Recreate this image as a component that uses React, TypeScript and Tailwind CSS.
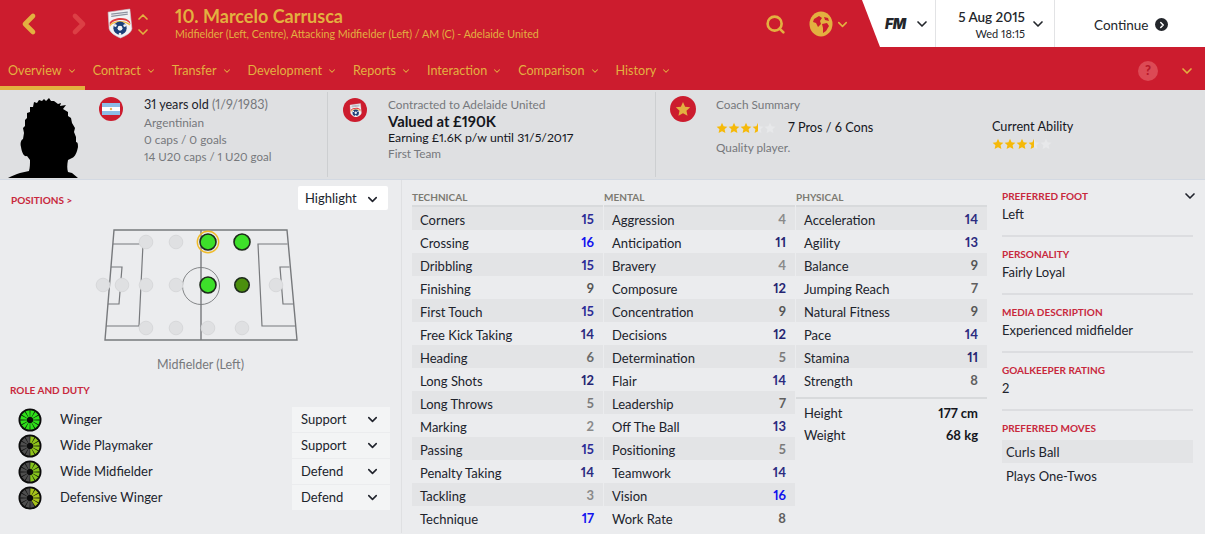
import { ChevronDown, ChevronLeft, ChevronRight, ChevronUp, Search } from "lucide-react";

const navItems = ["Overview", "Contract", "Transfer", "Development", "Reports", "Interaction", "Comparison", "History"];

const technical: [string, number][] = [
  ["Corners", 15], ["Crossing", 16], ["Dribbling", 15], ["Finishing", 9], ["First Touch", 15], ["Free Kick Taking", 14], ["Heading", 6],
  ["Long Shots", 12], ["Long Throws", 5], ["Marking", 2], ["Passing", 15], ["Penalty Taking", 14], ["Tackling", 3], ["Technique", 17],
];
const mental: [string, number][] = [
  ["Aggression", 4], ["Anticipation", 11], ["Bravery", 4], ["Composure", 12], ["Concentration", 9], ["Decisions", 12], ["Determination", 5],
  ["Flair", 14], ["Leadership", 7], ["Off The Ball", 13], ["Positioning", 5], ["Teamwork", 14], ["Vision", 16], ["Work Rate", 8],
];
const physical: [string, number][] = [
  ["Acceleration", 14], ["Agility", 13], ["Balance", 9], ["Jumping Reach", 7], ["Natural Fitness", 9], ["Pace", 14], ["Stamina", 11], ["Strength", 8],
];

const roles = [
  { name: "Winger", duty: "Support", color: "#2fe01a", lit: 12 },
  { name: "Wide Playmaker", duty: "Support", color: "#8fc31a", lit: 6 },
  { name: "Wide Midfielder", duty: "Defend", color: "#85c41c", lit: 6 },
  { name: "Defensive Winger", duty: "Defend", color: "#a8c41a", lit: 5 },
];

const details = [
  ["Preferred Foot", "Left"],
  ["Personality", "Fairly Loyal"],
  ["Media Description", "Experienced midfielder"],
  ["Goalkeeper Rating", "2"],
];

function statColor(v: number) {
  if (v >= 16) return "text-[#1212ee]";
  if (v === 15) return "text-[#2c2c96]";
  if (v >= 13) return "text-[#2b2b80]";
  if (v >= 11) return "text-[#252572]";
  if (v >= 9) return "text-[#555555]";
  if (v >= 7) return "text-[#5f5f5f]";
  if (v === 6) return "text-[#6a6a6a]";
  if (v === 5) return "text-[#7a7a7a]";
  return "text-[#8a8a8a]";
}

function Stars({ id }: { id: string }) {
  const star = "M6 .8l1.6 3.5 3.8.4-2.8 2.6.8 3.8L6 9.2l-3.4 1.9.8-3.8L.6 4.7l3.8-.4z";
  return (
    <svg width="61" height="12" viewBox="0 0 61 12">
      <defs>
        <clipPath id={id}><rect x="0" y="0" width="42" height="12" /></clipPath>
      </defs>
      {[0, 12, 24, 36, 48].map((x) => (
        <path key={x} d={star} transform={`translate(${x} 0)`} fill="#e7e8ea" />
      ))}
      <g clipPath={`url(#${id})`}>
        {[0, 12, 24, 36].map((x) => (
          <path key={x} d={star} transform={`translate(${x} 0)`} fill="#f5b90a" />
        ))}
      </g>
    </svg>
  );
}

function Silhouette() {
  return (
    <svg width="84" height="84" viewBox="0 0 84 84" className="block">
      <path
        fill="#000"
        d="M8 83 C12 81 16 79 20 78 L29 76 C30 72 30 69 30 65 L27 61 C24 62 22 58 21 52 C20 48 21 45 23 44 L24 38 L23 33 L25 31 L25 25 L27 23 L27 18 L30 17 L30 12 L33 12 L34 7 L37 8 L39 5 L42 6 L44 4 L46 6 L49 3 L51 6 L54 6 L58 9 L61 8 L60 11 L66 10 L63 14 L68 17 L68 21 L71 23 L72 28 L75 33 L74 37 L76 42 L76 47 C78 47 78 50 78 52 C77 57 75 62 72 63 L68 65 C67 70 67 74 68 77 L72 78 L78 83 Z"
      />
    </svg>
  );
}

function Flag() {
  return (
    <svg width="24" height="24" viewBox="0 0 24 24">
      <circle cx="12" cy="12" r="12" fill="#cc1c2e" />
      <rect x="3" y="6" width="18" height="12" fill="#fff" />
      <rect x="3" y="6" width="18" height="4" fill="#8dbde6" />
      <rect x="3" y="14" width="18" height="4" fill="#8dbde6" />
      <circle cx="12" cy="12" r="1.2" fill="#e8b45a" />
    </svg>
  );
}

function ClubBadge({ size }: { size: number }) {
  return (
    <svg width={size} height={size * 1.15} viewBox="0 0 26 30">
      <path d="M2 4 L23 1 L25 20 C24 25 18 27 14 29 C9 27 4 24 3 20 Z" fill="#f2f2f4" stroke="#c9ccd2" strokeWidth="0.6" />
      <path d="M5 6 L21 4 M5 8 L21 6" stroke="#8d93a0" strokeWidth="1.2" />
      <path d="M3.6 18 C4 11 20 9 23.6 16 L23 13 C19 8 7 9 3.5 14 Z" fill="#e23a3f" />
      <path d="M4 18 C6 13 18 12 23 17 L23 15.5 C18 11 7 12 3.8 16 Z" fill="#f0b63a" />
      <circle cx="13.5" cy="19.5" r="6.4" fill="#1d3f78" />
      <circle cx="13.5" cy="19.5" r="2.4" fill="#f2f2f4" />
      <circle cx="9" cy="17" r="1.3" fill="#f2f2f4" />
      <circle cx="18" cy="17" r="1.3" fill="#f2f2f4" />
      <circle cx="13.5" cy="25" r="1.2" fill="#f2f2f4" />
    </svg>
  );
}

function Globe() {
  return (
    <svg width="24" height="26" viewBox="0 0 24 26">
      <ellipse cx="12" cy="13" rx="11.5" ry="12.5" fill="#e3b040" />
      <path d="M5 8 L10 5 L13 7 L11 10 L12 13 L9 16 L7 12 L4 11 Z M13 13 L18 12 L20 15 L17 20 L14 22 L14 17 Z M15 6 L19 7 L20 10 L16 9 Z" fill="#cc1c2e" />
    </svg>
  );
}

function RoleWheel({ color, lit }: { color: string; lit: number }) {
  const segments = Array.from({ length: 12 }, (_, i) => i);
  return (
    <svg width="24" height="24" viewBox="-12 -12 24 24">
      <circle r="11.5" fill="#0c0c0c" />
      {segments.map((i) => {
        const a0 = ((i * 30 + 2.5) * Math.PI) / 180;
        const a1 = ((i * 30 + 27.5) * Math.PI) / 180;
        const r1 = 9.8;
        const r0 = 3.2;
        const d = `M${r0 * Math.sin(a0)} ${-r0 * Math.cos(a0)} L${r1 * Math.sin(a0)} ${-r1 * Math.cos(a0)} L${r1 * Math.sin(a1)} ${-r1 * Math.cos(a1)} L${r0 * Math.sin(a1)} ${-r0 * Math.cos(a1)} Z`;
        return <path key={i} d={d} fill={i < lit ? color : "#4e4e4e"} />;
      })}
    </svg>
  );
}

function Pitch() {
  const line = "#77797c";
  const grey = [[146, 242], [176, 242], [103, 285], [122, 285], [146, 285], [176, 285], [276, 285], [146, 328], [176, 328], [208, 328], [242, 328]];
  return (
    <svg width="401" height="125" viewBox="0 222 401 125" className="block">
      <g fill="none" stroke={line} strokeWidth="1.2">
        <path d="M114 230 H287 L297 340 H105 Z" strokeWidth="1.4" />
        <path d="M201 230 V340" strokeWidth="1.4" />
        <circle cx="201" cy="286" r="18.5" strokeWidth="0.9" />
        <path d="M113 244 H143 L139 326 H106" />
        <path d="M111 267 H122 L119 304 H108" />
        <path d="M287.5 244 H258 L262 326 H295" />
        <path d="M289.5 267 H280 L283 304 H293" />
      </g>
      {grey.map(([x, y]) => (
        <circle key={`${x}-${y}`} cx={x} cy={y} r="6.8" fill="#dfe0e2" stroke="#d7d8da" />
      ))}
      <circle cx="208" cy="242" r="10.7" fill="none" stroke="#f0bb2a" strokeWidth="1.4" />
      <circle cx="208" cy="242" r="8" fill="#3de02a" stroke="#1d2b1b" strokeWidth="1.6" />
      <circle cx="242" cy="242" r="8" fill="#3de02a" stroke="#1d2b1b" strokeWidth="1.6" />
      <circle cx="208" cy="285" r="8" fill="#3de02a" stroke="#1d2b1b" strokeWidth="1.6" />
      <circle cx="242" cy="285" r="7.2" fill="#4b8f0e" stroke="#1d2b1b" strokeWidth="1.6" />
    </svg>
  );
}

function StatColumn({ title, rows }: { title: string; rows: [string, number][] }) {
  return (
    <div className="w-[191px]">
      <div className="h-[27px] border-b-2 border-[#d8dadc] pt-[11px] text-[10px] leading-[12px] font-bold text-[#7c7a72] uppercase">{title}</div>
      {rows.map(([name, value], i) => (
        <div key={name} className={`flex h-[23px] items-center justify-between pt-[5px] pr-[9px] pl-2 text-[13px] text-[#20232c] ${i % 2 === 0 ? "bg-[#e3e4e6]" : ""}`}>
          <span>{name}</span>
          <span className={`-mt-[2px] font-bold ${statColor(value)}`}>{value}</span>
        </div>
      ))}
    </div>
  );
}

export default function App() {
  return (
    <div className="h-[534px] w-[1205px] overflow-hidden bg-[#ebecee] font-[Lato,sans-serif] text-[#20232c] proportional-nums">
      <header className="h-[90px] bg-[#cc1c2e] text-[#e3b040]">
        <div className="flex h-[48px]">
          <div className="flex flex-1 items-center">
            <ChevronLeft size={32} strokeWidth={3.5} className="ml-[13px]" />
            <ChevronRight size={32} strokeWidth={3.5} className="ml-[18px] text-[#dc3f45]" />
            <div className="ml-[11px]"><ClubBadge size={27} /></div>
            <div className="ml-[2px] flex flex-col">
              <ChevronUp size={16} strokeWidth={2.5} className="-mb-[1px]" />
              <ChevronDown size={16} strokeWidth={2.5} />
            </div>
            <div className="-mt-[3px] ml-[24px]">
              <div className="text-[18px] leading-[21px] font-bold">10. Marcelo Carrusca</div>
              <div className="text-[10.7px] leading-[13px]">Midfielder (Left, Centre), Attacking Midfielder (Left) / AM (C) - Adelaide United</div>
            </div>
            <Search size={21} strokeWidth={3} className="mr-[23px] ml-auto" />
            <Globe />
            <ChevronDown size={15} strokeWidth={2.5} className="mr-[12px] ml-[2px]" />
          </div>
          <div className="flex h-[47px] w-[343px] items-center bg-white pl-[23px] text-[#23262b] [clip-path:polygon(0_0,100%_0,100%_100%,18px_100%)]">
            <span className="w-[22px] font-[Inter,sans-serif] text-[14px] leading-none font-black tracking-tight italic">FM</span>
            <ChevronDown size={16} strokeWidth={2.5} className="ml-[7px]" />
            <div className="ml-[5px] h-full w-px bg-[#e2e3e5]" />
            <div className="w-[89px] pt-[3px] text-right leading-none">
              <div className="text-[13.5px] font-semibold">5 Aug 2015</div>
              <div className="mt-[3px] text-[11px]">Wed 18:15</div>
            </div>
            <ChevronDown size={16} strokeWidth={2.5} className="ml-[5px]" />
            <div className="ml-[8px] h-full w-px bg-[#e2e3e5]" />
            <span className="mt-[3px] ml-[39px] text-[13.5px]">Continue</span>
            <div className="mt-[2px] ml-[7px] flex h-[13px] w-[13px] items-center justify-center rounded-full bg-[#23262b]">
              <ChevronRight size={10} strokeWidth={3.5} className="text-white" />
            </div>
          </div>
        </div>
        <nav className="flex h-[42px] items-stretch">
          {navItems.map((item, i) => (
            <div key={item} className={`flex h-[42px] items-center gap-[5px] px-2 text-[12.6px] ${i === 0 ? "border-b-[4px] border-[#e3b040] pt-[8px]" : "pt-[4px]"}`}>
              {item}
              <ChevronDown size={10} strokeWidth={2.5} />
            </div>
          ))}
          <div className="mr-[10px] ml-auto flex items-center gap-[21px] pt-[4px]">
            <div className="flex h-[20px] w-[20px] items-center justify-center rounded-full bg-[#dc4a55] text-[13px] font-black text-[#b8182a]">?</div>
            <ChevronDown size={16} strokeWidth={2.5} />
          </div>
        </nav>
      </header>

      <section className="flex h-[90px] border-b border-[#d3d9e2] bg-[#dfe0e2] text-[11.8px]">
        <div className="flex w-[327px]">
          <div className="mt-[5px] shrink-0"><Silhouette /></div>
          <div className="mt-[7px] ml-[15px] shrink-0"><Flag /></div>
          <div className="mt-[6px] ml-[21px] leading-[17px] text-[#76787c]">
            <div className="text-[12.6px] text-[#20232c]">31 years old <span className="text-[#76787c]">(1/9/1983)</span></div>
            <div className="mt-[1px]">Argentinian</div>
            <div>0 caps / 0 goals</div>
            <div className="text-[11.5px]">14 U20 caps / 1 U20 goal</div>
          </div>
        </div>
        <div className="my-[2px] w-px bg-[#cdcfd1]" />
        <div className="flex w-[327px]">
          <div className="mt-[8px] ml-[15px] flex h-[24px] w-[24px] shrink-0 items-center justify-center rounded-full bg-[#cc1c2e]"><ClubBadge size={13} /></div>
          <div className="mt-[7px] ml-[21px]">
            <div className="leading-[15px] text-[#76787c]">Contracted to Adelaide United</div>
            <div className="text-[14.8px] leading-[18px] font-bold text-[#14161c]">Valued at £190K</div>
            <div className="text-[12.3px] leading-[16px] text-[#14161c]">Earning £1.6K p/w until 31/5/2017</div>
            <div className="leading-[15px] text-[#76787c]">First Team</div>
          </div>
        </div>
        <div className="my-[2px] w-px bg-[#cdcfd1]" />
        <div className="flex flex-1">
          <div className="mt-[6px] ml-[14px] flex h-[26px] w-[26px] shrink-0 items-center justify-center rounded-full bg-[#cc1c2e]">
            <svg width="16" height="16" viewBox="0 0 12 12"><path d="M6 .8l1.6 3.5 3.8.4-2.8 2.6.8 3.8L6 9.2l-3.4 1.9.8-3.8L.6 4.7l3.8-.4z" fill="#e3b040" /></svg>
          </div>
          <div className="mt-[7px] ml-[20px] w-[276px]">
            <div className="leading-[15px] text-[#76787c]">Coach Summary</div>
            <div className="mt-[7px] flex h-[18px] items-center gap-[11px] text-[12.7px] text-[#14161c]"><Stars id="coach-stars" />7 Pros / 6 Cons</div>
            <div className="mt-[3px] leading-[15px] text-[#76787c]">Quality player.</div>
          </div>
          <div className="mt-[28px]">
            <div className="text-[12.7px] leading-[16px] text-[#14161c]">Current Ability</div>
            <div className="mt-[4px]"><Stars id="ability-stars" /></div>
          </div>
        </div>
      </section>

      <main className="flex">
        <div className="h-[353px] w-[402px] shrink-0 border-r border-[#dfe0e2]">
          <div className="flex h-[42px] items-start justify-between pt-[6px] pr-[13px] pl-[11px]">
            <span className="mt-[8px] text-[10px] leading-[12px] font-bold text-[#c8283c] uppercase">Positions &gt;</span>
            <div className="flex h-[24px] w-[90px] items-center justify-between rounded-[2px] bg-white pt-[2px] pr-[8px] pl-[7px] text-[13px]">
              Highlight <ChevronDown size={15} strokeWidth={2.5} />
            </div>
          </div>
          <Pitch />
          <div className="mt-[10px] text-center text-[12.5px] leading-[16px] text-[#77797c]">Midfielder (Left)</div>
          <div className="mt-[11px] pl-[10px] text-[10px] leading-[12px] font-bold text-[#c8283c] uppercase">Role and Duty</div>
          <div className="mt-[11px] flex flex-col gap-px pr-[11px] pl-[18px]">
            {roles.map((role) => (
              <div key={role.name} className="flex h-[25px] items-center text-[13px]">
                <RoleWheel color={role.color} lit={role.lit} />
                <span className="ml-[18px]">{role.name}</span>
                <div className="ml-auto flex h-[25px] w-[98px] items-center justify-between bg-[#f3f4f5] pr-[10px] pl-[9px]">
                  {role.duty} <ChevronDown size={15} strokeWidth={2.5} />
                </div>
              </div>
            ))}
          </div>
        </div>

        <div className="ml-[10px] flex w-[575px] shrink-0 gap-px">
          <StatColumn title="Technical" rows={technical} />
          <StatColumn title="Mental" rows={mental} />
          <div className="w-[191px]">
            <StatColumn title="Physical" rows={physical} />
            <div className="mt-[6px] border-t-2 border-[#d8dadc] pt-[4px] pr-[9px] pl-2 text-[13px]">
              <div className="flex h-[22px] items-center justify-between">Height <b className="font-bold text-[#14161c]">177 cm</b></div>
              <div className="flex h-[22px] items-center justify-between">Weight <b className="font-bold text-[#14161c]">68 kg</b></div>
            </div>
          </div>
        </div>

        <div className="ml-[15px] w-[191px] shrink-0 pt-[10px]">
          {details.map(([label, value], i) => (
            <div key={label} className="relative h-[58px]">
              <div className="text-[10px] leading-[12px] font-bold text-[#c8283c] uppercase">{label}</div>
              <div className="mt-[3px] text-[13px] leading-[18px]">{value}</div>
              <div className="mt-[12px] h-[2px] bg-[#dcdde0]" />
              {i === 0 && <ChevronDown size={16} strokeWidth={2.5} className="absolute top-[-2px] right-[-5px]" />}
            </div>
          ))}
          <div className="text-[10px] leading-[12px] font-bold text-[#c8283c] uppercase">Preferred Moves</div>
          <div className="mt-[6px] flex h-[23px] items-center bg-[#e3e4e6] pt-[2px] pl-[4px] text-[13px]">Curls Ball</div>
          <div className="mt-px flex h-[23px] items-center pt-[2px] pl-[4px] text-[13px]">Plays One-Twos</div>
        </div>
      </main>
    </div>
  );
}
